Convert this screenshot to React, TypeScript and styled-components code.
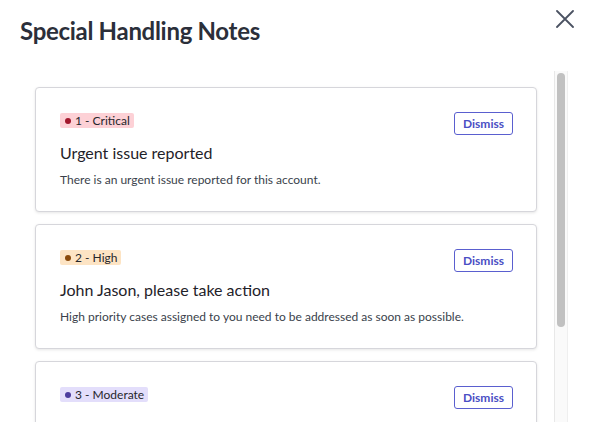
import styled, { createGlobalStyle } from 'styled-components'

const GlobalStyle = createGlobalStyle`
  html, body {
    margin: 0;
    padding: 0;
    background: #ffffff;
    font-family: Lato, "Open Sans", sans-serif;
    color: #1f2229;
  }
`

const Modal = styled.div`
  width: 590px;
  height: 422px;
  display: flex;
  flex-direction: column;
  overflow: hidden;
`

const Header = styled.div`
  display: flex;
  justify-content: space-between;
  align-items: flex-start;
  padding: 0 15px 0 20px;
  height: 71px;
  flex-shrink: 0;
`

const Title = styled.h2`
  margin: 15px 0 0;
  font-size: 24px;
  line-height: 32px;
  font-weight: 700;
  color: #2b2f3a;
  letter-spacing: -0.3px;
`

const CloseButton = styled.button`
  border: none;
  background: none;
  padding: 0;
  margin-top: 9px;
  width: 20px;
  height: 20px;
  cursor: pointer;
  display: flex;
  align-items: center;
  justify-content: center;
`

const Body = styled.div`
  flex: 1;
  min-height: 0;
  display: flex;
  margin: 0 22px 0 20px;
`

const List = styled.div`
  flex: 1;
  min-width: 0;
  overflow: hidden;
  padding: 16px 17px 0 15px;
  display: flex;
  flex-direction: column;
  gap: 12px;
`

const Track = styled.div`
  width: 14px;
  flex-shrink: 0;
  box-sizing: border-box;
  background: #fafafa;
  border-left: 1px solid #e8e8e8;
  border-right: 1px solid #efefef;
  padding: 2px 2px 0 2px;
`

const Thumb = styled.div`
  height: 254px;
  border-radius: 4px;
  background: #c1c1c1;
`

const Card = styled.div`
  flex-shrink: 0;
  border: 1px solid #d6d6db;
  border-radius: 4px;
  box-shadow: 0 1px 3px rgba(0, 0, 0, 0.1);
  padding: 24px 23px 24px 24px;
  background: #fff;
`

const CardTop = styled.div`
  display: flex;
  justify-content: space-between;
  align-items: flex-start;
`

const Badge = styled.span<{ bg: string; dot: string }>`
  display: inline-flex;
  align-items: center;
  gap: 4px;
  margin-top: 1px;
  padding: 0 4px 0 5px;
  height: 15px;
  border-radius: 2px;
  background: ${p => p.bg};
  font-size: 12px;
  color: #26262b;
  &::before {
    content: '';
    width: 6px;
    height: 6px;
    border-radius: 50%;
    background: ${p => p.dot};
  }
`

const DismissButton = styled.button`
  font-family: Lato, sans-serif;
  font-weight: 700;
  font-size: 12px;
  color: #4a4fc4;
  background: #fff;
  border: 1px solid #5a5fcf;
  border-radius: 3px;
  width: 59px;
  height: 23px;
  padding: 0;
  cursor: pointer;
`

const NoteTitle = styled.div`
  margin-top: 8px;
  font-size: 16px;
  line-height: 20px;
  color: #1f2229;
`

const NoteText = styled.div`
  margin-top: 9px;
  font-size: 12px;
  line-height: 15px;
  color: #3a3f4b;
`

const notes = [
  {
    level: '1 - Critical',
    bg: '#fdd1d6',
    dot: '#a3172c',
    title: 'Urgent issue reported',
    text: 'There is an urgent issue reported for this account.',
  },
  {
    level: '2 - High',
    bg: '#fde4c4',
    dot: '#8a4a0c',
    title: 'John Jason, please take action',
    text: 'High priority cases assigned to you need to be addressed as soon as possible.',
  },
  {
    level: '3 - Moderate',
    bg: '#e3defb',
    dot: '#4c3c9e',
    title: 'Account review pending',
    text: 'A moderate priority review is pending for this account.',
  },
]

function CloseIcon() {
  return (
    <svg width="18" height="18" viewBox="0 0 18 18">
      <path d="M1 1 L17 17 M17 1 L1 17" stroke="#4b5262" strokeWidth="1.8" strokeLinecap="round" />
    </svg>
  )
}

export default function App() {
  return (
    <Modal>
      <GlobalStyle />
      <Header>
        <Title>Special Handling Notes</Title>
        <CloseButton aria-label="Close">
          <CloseIcon />
        </CloseButton>
      </Header>
      <Body>
        <List>
          {notes.map(n => (
            <Card key={n.level}>
              <CardTop>
                <Badge bg={n.bg} dot={n.dot}>{n.level}</Badge>
                <DismissButton>Dismiss</DismissButton>
              </CardTop>
              <NoteTitle>{n.title}</NoteTitle>
              <NoteText>{n.text}</NoteText>
            </Card>
          ))}
        </List>
        <Track>
          <Thumb />
        </Track>
      </Body>
    </Modal>
  )
}
